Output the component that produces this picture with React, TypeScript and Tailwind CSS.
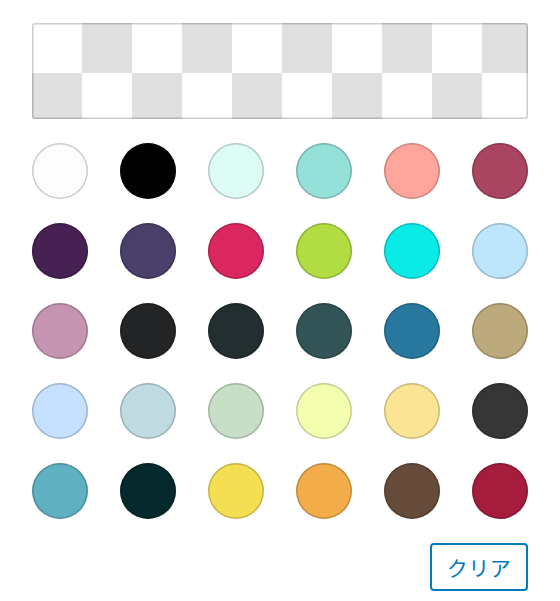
import React from "react";

const colors = [
  ["#fdfdfd", "#000000", "#dcfcf5", "#95e0d9", "#ffa59c", "#a94461"],
  ["#472154", "#4a3f6b", "#da2760", "#b1dc42", "#0aeae6", "#bde6fc"],
  ["#c494b1", "#232425", "#232e30", "#325457", "#28779f", "#bcaa7c"],
  ["#c6e0ff", "#c1dbe3", "#c7dfc6", "#f4ffb0", "#fbe595", "#363636"],
  ["#5fb0c1", "#05292c", "#f4df52", "#f2ac49", "#664b3a", "#a51c3c"],
].flat();

export default function App() {
  return (
    <div className="w-[560px] h-[601px] bg-white px-8 pt-[23px] font-['Noto_Sans_CJK_JP',sans-serif]">
      <div className="h-[96px] rounded-[3px] bg-[repeating-conic-gradient(#e0e0e0_0%_25%,#ffffff_0%_50%)] bg-[length:100px_100px] shadow-[inset_0_0_0_1.5px_rgba(0,0,0,0.2)]" />
      <div className="mt-6 grid grid-cols-6 gap-x-8 gap-y-6">
        {colors.map((c, i) => (
          <button
            key={i}
            className="w-14 h-14 rounded-full shadow-[inset_0_0_0_1.5px_rgba(0,0,0,0.2)]"
            style={{ backgroundColor: c }}
            aria-label={c}
          />
        ))}
      </div>
      <div className="mt-6 flex justify-end">
        <button className="w-[98px] h-12 rounded-[4px] border-2 border-[#007cba] text-[#007cba] text-[21px] leading-none tracking-[0.5px] flex items-center justify-center">
          クリア
        </button>
      </div>
    </div>
  );
}
